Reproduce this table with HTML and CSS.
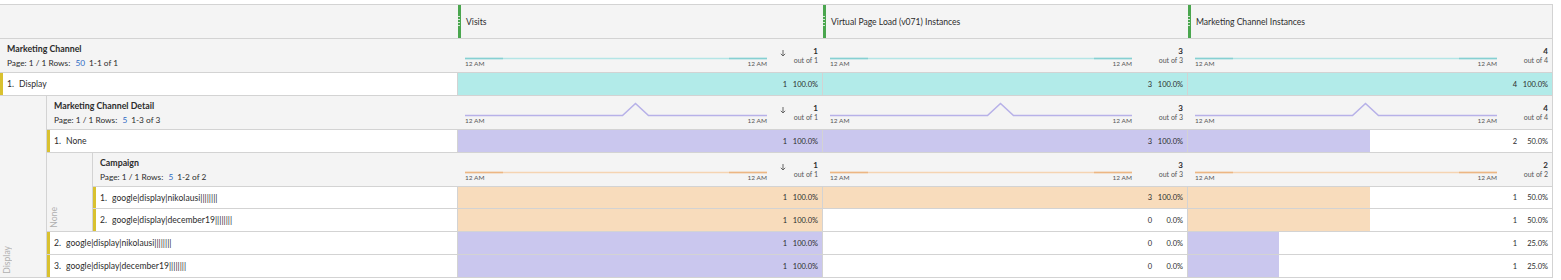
FILE: index.html
```html
<!DOCTYPE html>
<html>
<head>
<meta charset="utf-8">
<link rel="stylesheet" href="styles.css">
</head>
<body>
<div class="table">
  <div class="row colhead">
    <div class="lab"></div>
    <div class="mc"><div class="grip"><i></i></div><span class="ct">Visits</span></div>
    <div class="mc"><div class="grip"><i></i></div><span class="ct">Virtual Page Load (v071) Instances</span></div>
    <div class="mc"><div class="grip"><i></i></div><span class="ct">Marketing Channel Instances</span></div>
  </div>

  <div class="row dimhead">
    <div class="lab"><div class="dt">Marketing Channel</div><div class="pg">Page: 1 / 1 Rows: <span class="lnk">50</span>1-1 of 1</div></div>
    <div class="mc">
      <div class="spark"><svg viewBox="0 0 302 16"><path class="lt teal" d="M0 14.5H302"/><path class="dk teal" d="M0 14.5H38M264 14.5H302"/></svg><div class="ax"><span>12 AM</span><span>12 AM</span></div></div>
      <div class="sort"><svg viewBox="0 0 6 7"><path d="M3 0V6M0.8 3.8L3 6L5.2 3.8"/></svg></div>
      <div class="tot"><b>1</b><span>out of 1</span></div>
    </div>
    <div class="mc">
      <div class="spark"><svg viewBox="0 0 302 16"><path class="lt teal" d="M0 14.5H302"/><path class="dk teal" d="M0 14.5H38M264 14.5H302"/></svg><div class="ax"><span>12 AM</span><span>12 AM</span></div></div>
      <div class="tot"><b>3</b><span>out of 3</span></div>
    </div>
    <div class="mc">
      <div class="spark"><svg viewBox="0 0 302 16"><path class="lt teal" d="M0 14.5H302"/><path class="dk teal" d="M0 14.5H38M264 14.5H302"/></svg><div class="ax"><span>12 AM</span><span>12 AM</span></div></div>
      <div class="tot"><b>4</b><span>out of 4</span></div>
    </div>
  </div>

  <div class="row data">
    <div class="lab"><span class="n">1.</span>Display</div>
    <div class="mc val teal" style="--w:100%"><span>1</span><span class="p">100.0%</span></div>
    <div class="mc val teal" style="--w:100%"><span>3</span><span class="p">100.0%</span></div>
    <div class="mc val teal" style="--w:100%"><span>4</span><span class="p">100.0%</span></div>
  </div>

  <div class="nest">
    <div class="strip"><span class="vlab">Display</span></div>
    <div class="nbody">
      <div class="row dimhead">
        <div class="lab"><div class="dt">Marketing Channel Detail</div><div class="pg">Page: 1 / 1 Rows: <span class="lnk">5</span>1-3 of 3</div></div>
        <div class="mc">
          <div class="spark"><svg viewBox="0 0 302 16"><path class="lt purple" d="M0 14.5H157.5L170.5 2.5L183.5 14.5H302"/></svg><div class="ax"><span>12 AM</span><span>12 AM</span></div></div>
          <div class="sort"><svg viewBox="0 0 6 7"><path d="M3 0V6M0.8 3.8L3 6L5.2 3.8"/></svg></div>
          <div class="tot"><b>1</b><span>out of 1</span></div>
        </div>
        <div class="mc">
          <div class="spark"><svg viewBox="0 0 302 16"><path class="lt purple" d="M0 14.5H157.5L170.5 2.5L183.5 14.5H302"/></svg><div class="ax"><span>12 AM</span><span>12 AM</span></div></div>
          <div class="tot"><b>3</b><span>out of 3</span></div>
        </div>
        <div class="mc">
          <div class="spark"><svg viewBox="0 0 302 16"><path class="lt purple" d="M0 14.5H157.5L170.5 2.5L183.5 14.5H302"/></svg><div class="ax"><span>12 AM</span><span>12 AM</span></div></div>
          <div class="tot"><b>4</b><span>out of 4</span></div>
        </div>
      </div>

      <div class="row data">
        <div class="lab"><span class="n">1.</span>None</div>
        <div class="mc val purple" style="--w:100%"><span>1</span><span class="p">100.0%</span></div>
        <div class="mc val purple" style="--w:100%"><span>3</span><span class="p">100.0%</span></div>
        <div class="mc val purple" style="--w:50%"><span>2</span><span class="p">50.0%</span></div>
      </div>

      <div class="nest">
        <div class="strip inner"><span class="vlab">None</span></div>
        <div class="nbody">
          <div class="row dimhead">
            <div class="lab"><div class="dt">Campaign</div><div class="pg">Page: 1 / 1 Rows: <span class="lnk">5</span>1-2 of 2</div></div>
            <div class="mc">
              <div class="spark"><svg viewBox="0 0 302 16"><path class="lt peach" d="M0 14.5H302"/><path class="dk peach" d="M0 14.5H38M264 14.5H302"/></svg><div class="ax"><span>12 AM</span><span>12 AM</span></div></div>
              <div class="sort"><svg viewBox="0 0 6 7"><path d="M3 0V6M0.8 3.8L3 6L5.2 3.8"/></svg></div>
              <div class="tot"><b>1</b><span>out of 1</span></div>
            </div>
            <div class="mc">
              <div class="spark"><svg viewBox="0 0 302 16"><path class="lt peach" d="M0 14.5H302"/><path class="dk peach" d="M0 14.5H38M264 14.5H302"/></svg><div class="ax"><span>12 AM</span><span>12 AM</span></div></div>
              <div class="tot"><b>3</b><span>out of 3</span></div>
            </div>
            <div class="mc">
              <div class="spark"><svg viewBox="0 0 302 16"><path class="lt peach" d="M0 14.5H302"/><path class="dk peach" d="M0 14.5H38M264 14.5H302"/></svg><div class="ax"><span>12 AM</span><span>12 AM</span></div></div>
              <div class="tot"><b>2</b><span>out of 2</span></div>
            </div>
          </div>

          <div class="row data short">
            <div class="lab"><span class="n">1.</span>google|display|nikolausi||||||||</div>
            <div class="mc val peach" style="--w:100%"><span>1</span><span class="p">100.0%</span></div>
            <div class="mc val peach" style="--w:100%"><span>3</span><span class="p">100.0%</span></div>
            <div class="mc val peach" style="--w:50%"><span>1</span><span class="p">50.0%</span></div>
          </div>
          <div class="row data">
            <div class="lab"><span class="n">2.</span>google|display|december19||||||||</div>
            <div class="mc val peach" style="--w:100%"><span>1</span><span class="p">100.0%</span></div>
            <div class="mc val peach" style="--w:0%"><span>0</span><span class="p">0.0%</span></div>
            <div class="mc val peach" style="--w:50%"><span>1</span><span class="p">50.0%</span></div>
          </div>
        </div>
      </div>

      <div class="row data">
        <div class="lab"><span class="n">2.</span>google|display|nikolausi||||||||</div>
        <div class="mc val purple" style="--w:100%"><span>1</span><span class="p">100.0%</span></div>
        <div class="mc val purple" style="--w:0%"><span>0</span><span class="p">0.0%</span></div>
        <div class="mc val purple" style="--w:25%"><span>1</span><span class="p">25.0%</span></div>
      </div>
      <div class="row data">
        <div class="lab"><span class="n">3.</span>google|display|december19||||||||</div>
        <div class="mc val purple" style="--w:100%"><span>1</span><span class="p">100.0%</span></div>
        <div class="mc val purple" style="--w:0%"><span>0</span><span class="p">0.0%</span></div>
        <div class="mc val purple" style="--w:25%"><span>1</span><span class="p">25.0%</span></div>
      </div>
    </div>
  </div>
</div>
</body>
</html>
```
FILE: styles.css
```css
* { box-sizing: border-box; margin: 0; padding: 0; }
body {
  margin: 0;
  background: #fff;
  font-family: Lato, "Open Sans", "Liberation Sans", sans-serif;
  color: #2c2c2c;
}
.table {
  width: 1553px;
  margin-top: 4px;
  border-top: 1px solid #d3d3d3;
}
.row {
  display: flex;
  border-bottom: 1px solid #d3d3d3;
}
.lab {
  flex: 1;
  min-width: 0;
  border-right: 1px solid #d3d3d3;
}
.mc {
  width: 365px;
  flex: none;
  border-right: 1px solid #d3d3d3;
}

/* column header row */
.colhead { height: 34px; background: #f4f4f4; }
.colhead .lab { border-right-color: transparent; }
.colhead .mc {
  display: flex;
  align-items: center;
  border-right-color: transparent;
}
.colhead .mc:last-child { border-right-color: #d3d3d3; }
.grip {
  width: 3px;
  align-self: stretch;
  background: #4aa64e;
  display: flex;
  align-items: center;
}
.grip i {
  display: block;
  width: 2px;
  height: 11px;
  background: repeating-linear-gradient(to bottom, rgba(255,255,255,0.75) 0 1px, transparent 1px 3px);
}
.ct { margin-left: 5px; font-size: 8.6px; }

/* dimension header rows */
.dimhead { height: 34px; background: #f4f4f4; }
.dimhead .lab { border-right-color: transparent; padding: 3px 0 0 7px; }
.dt { font-weight: 700; font-size: 8.8px; line-height: 14px; }
.pg { font-size: 8.3px; line-height: 14px; }
.lnk { color: #2f6bc4; margin: 0 4px 0 3px; }
.dimhead .mc { display: flex; border-right-color: transparent; }
.dimhead .mc:last-child { border-right-color: #d3d3d3; }
.spark { width: 302px; flex: none; margin: 5px 0 0 7px; }
.spark svg { display: block; width: 302px; height: 16px; overflow: visible; }
.spark path { fill: none; stroke-width: 1.6; }
.lt.teal { stroke: #b4e5e6; }
.dk.teal { stroke: #86d0d2; }
.lt.purple { stroke: #b7b1e8; }
.lt.peach { stroke: #f5d4b2; }
.dk.peach { stroke: #ecb683; }
.ax {
  display: flex;
  justify-content: space-between;
  font-size: 6.5px;
  line-height: 7px;
  color: #555;
}
.sort { margin: 11px 0 0 13px; }
.sort svg { display: block; width: 6px; height: 7px; }
.sort path { fill: none; stroke: #666; stroke-width: 1; }
.tot {
  margin-left: auto;
  padding: 7px 4px 0 0;
  display: flex;
  flex-direction: column;
  align-items: flex-end;
}
.tot b { font-size: 8px; line-height: 10px; font-weight: 700; }
.tot span { font-size: 7px; line-height: 9px; color: #555; }

/* data rows */
.data { height: 23px; }
.data.short { height: 22px; }
.data .lab {
  background: #fff;
  border-left: 3px solid #d9c12f;
  padding-left: 4px;
  display: flex;
  align-items: center;
  font-size: 8.6px;
  white-space: nowrap;
}
.n { margin-right: 5px; }
.val {
  --c: #fff;
  display: flex;
  justify-content: flex-end;
  align-items: center;
  padding-right: 4px;
  font-size: 7.5px;
  background: linear-gradient(to right, var(--c) var(--w), #fff var(--w));
}
.val.teal { --c: #b2ebe9; }
.val.purple { --c: #cac7ee; }
.val.peach { --c: #f8dcbc; }
.val .p { min-width: 28px; text-align: right; margin-left: 3px; }

/* nested blocks */
.nest { display: flex; }
.strip {
  width: 47px;
  flex: none;
  background: #f4f4f4;
  border-right: 1px solid #d3d3d3;
  border-bottom: 1px solid #d3d3d3;
  display: flex;
  flex-direction: column;
  justify-content: flex-end;
  align-items: flex-start;
  padding: 0 0 3px 1px;
}
.strip.inner { width: 46px; }
.nbody { flex: 1; min-width: 0; }
.vlab {
  writing-mode: vertical-rl;
  transform: rotate(180deg);
  font-size: 8.6px;
  line-height: 12px;
  color: #b0b0b0;
}
```
